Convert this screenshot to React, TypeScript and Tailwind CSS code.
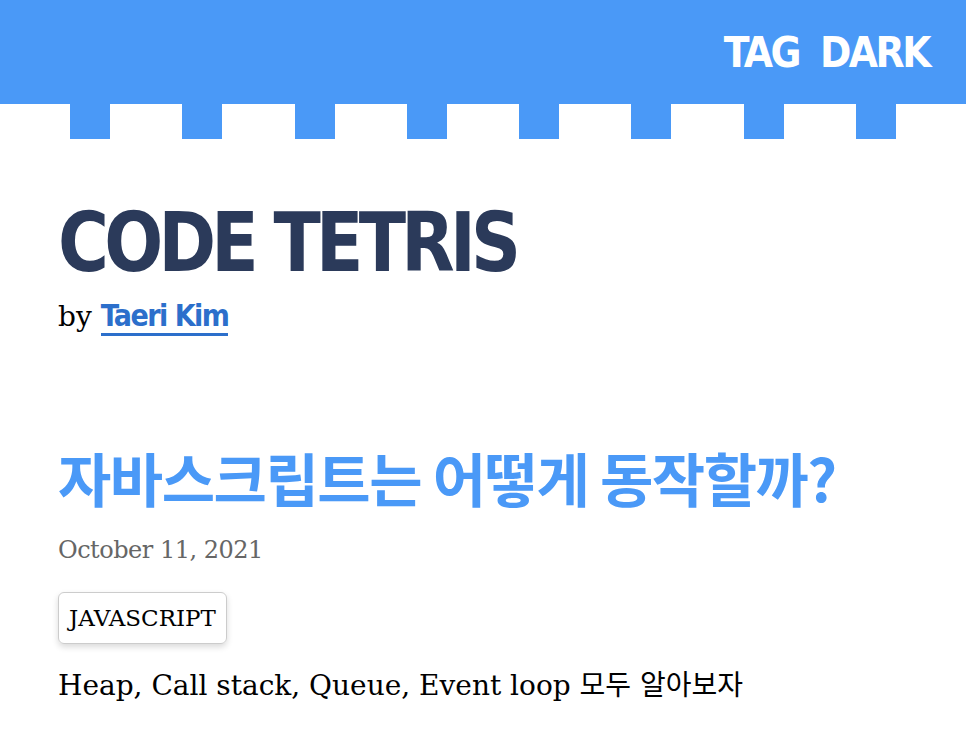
import React from "react";

export default function App() {
  const teeth = Array.from({ length: 8 });
  return (
    <div className="w-[966px] h-[730px] bg-white overflow-hidden">
      <header className="h-[104px] bg-[#4a99f7] flex items-center justify-end pr-[37px]">
        <nav className="flex gap-[21px] text-white text-[42px] font-bold tracking-[-2.5px] font-['DejaVu_Sans_Condensed','DejaVu_Sans',sans-serif]">
          <span>TAG</span>
          <span>DARK</span>
        </nav>
      </header>
      <div className="flex justify-between px-[70px]">
        {teeth.map((_, i) => (
          <div key={i} className="w-[40px] h-[35px] bg-[#4a99f7]" />
        ))}
      </div>
      <main className="px-[58px]">
        <h1 className="mt-[63px] text-[82px] leading-none font-bold text-[#2b3a5a] tracking-[-5px] scale-x-[0.94] origin-left font-['DejaVu_Sans_Condensed','DejaVu_Sans',sans-serif]">
          CODE TETRIS
        </h1>
        <p className="mt-[12px] text-[28px] leading-[40px] text-black font-['DejaVu_Serif',serif]">
          by{" "}
          <a className="font-bold text-[30px] text-[#2c6fcb] border-b-[3px] border-[#2c6fcb] tracking-[-1.5px] font-['DejaVu_Sans_Condensed',sans-serif]">
            Taeri Kim
          </a>
        </p>
        <h2 className="mt-[111px] text-[58px] leading-none font-bold text-[#4a99f7] tracking-[-1.5px] font-['Noto_Sans_CJK_KR',sans-serif]">
          자바스크립트는 어떻게 동작할까?
        </h2>
        <div className="mt-[26px] text-[24px] tracking-[-0.5px] text-[#666] font-['DejaVu_Serif',serif]">
          October 11, 2021
        </div>
        <div className="mt-[24px] inline-flex items-center h-[52px] border border-[#ccc] rounded-[6px] px-[10px] text-[23px] shadow-[0_3px_6px_rgba(0,0,0,0.15)] font-['DejaVu_Serif',serif]">
          JAVASCRIPT
        </div>
        <p className="mt-[21px] text-[28px] text-black font-['DejaVu_Serif','Noto_Sans_CJK_KR',serif]">
          Heap, Call stack, Queue, Event loop 모두 알아보자
        </p>
      </main>
    </div>
  );
}
